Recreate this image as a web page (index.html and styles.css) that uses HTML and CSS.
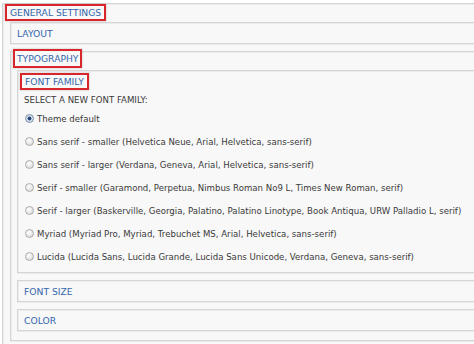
FILE: index.html
```html
<!DOCTYPE html>
<html>
<head>
<meta charset="utf-8">
<link rel="stylesheet" href="styles.css">
</head>
<body>
<div class="outer">
  <div class="legend-row top"><span class="legend mark">GENERAL SETTINGS</span></div>
  <div class="box collapsed first"><span class="title">LAYOUT</span></div>
  <div class="box typo">
    <div class="legend-row typo-legend"><span class="legend mark">TYPOGRAPHY</span></div>
    <div class="box family">
      <div class="legend-row fam-legend"><span class="legend mark">FONT FAMILY</span></div>
      <div class="desc">SELECT A NEW FONT FAMILY:</div>
      <ul class="options">
        <li><span class="radio checked"></span>Theme default</li>
        <li><span class="radio"></span>Sans serif - smaller (Helvetica Neue, Arial, Helvetica, sans-serif)</li>
        <li><span class="radio"></span>Sans serif - larger (Verdana, Geneva, Arial, Helvetica, sans-serif)</li>
        <li><span class="radio"></span>Serif - smaller (Garamond, Perpetua, Nimbus Roman No9 L, Times New Roman, serif)</li>
        <li><span class="radio"></span>Serif - larger (Baskerville, Georgia, Palatino, Palatino Linotype, Book Antiqua, URW Palladio L, serif)</li>
        <li><span class="radio"></span>Myriad (Myriad Pro, Myriad, Trebuchet MS, Arial, Helvetica, sans-serif)</li>
        <li><span class="radio"></span>Lucida (Lucida Sans, Lucida Grande, Lucida Sans Unicode, Verdana, Geneva, sans-serif)</li>
      </ul>
    </div>
    <div class="box collapsed sub"><span class="title">FONT SIZE</span></div>
    <div class="box collapsed sub"><span class="title">COLOR</span></div>
  </div>
</div>
</body>
</html>
```

FILE: styles.css
```css
html, body {
  margin: 0;
  padding: 0;
  background: #ffffff;
  overflow: hidden;
  width: 474px;
  height: 344px;
}
body {
  font-family: "DejaVu Sans", Verdana, sans-serif;
  font-size: 8.6px;
  color: #3a3a3a;
}
.outer {
  margin: 3px 0 0 2px;
  width: 700px;
  height: 341px;
  background: #f8f8f8;
  border-top: 1px solid #d5d5d5;
  border-left: 1px solid #d5d5d5;
  box-shadow: inset 1px 1px 0 #ececec;
  padding-left: 7px;
  box-sizing: border-box;
}
.legend-row {
  display: flex;
  height: 17px;
}
.legend-row.top {
  margin-left: -5px;
  margin-bottom: 1px;
}
.legend, .title {
  color: #3467ad;
  line-height: 13px;
  white-space: nowrap;
  font-size: 9.2px;
}
.mark {
  border: 2px solid #d9262c;
  padding: 0 3px;
  box-shadow: 0 0 2px rgba(120, 120, 120, 0.45);
  background: #f8f8f8;
}
.box {
  border: 1px solid #d5d5d5;
  box-shadow: inset 1px 1px 0 #ececec, 0 1px 0 #ebebeb;
  background: #f8f8f8;
  border-right: none;
}
.collapsed {
  height: 20px;
  display: flex;
  align-items: center;
  padding-left: 6px;
}
.typo {
  margin-top: 7px;
  padding-left: 6px;
  height: 288px;
}
.typo-legend {
  margin: -3px 0 0 -4px;
  height: 21px;
}
.typo-legend .mark {
  padding: 1px 2px;
  align-self: flex-start;
}
.family {
  padding-left: 6px;
  padding-bottom: 4px;
}
.fam-legend {
  margin: 2px 0 0 -4px;
}
.desc {
  margin-top: 4px;
  line-height: 13px;
  color: #3a3a3a;
}
.options {
  list-style: none;
  margin: 0;
  padding: 0;
}
.options li {
  height: 23px;
  display: flex;
  align-items: center;
  white-space: nowrap;
  color: #3a3a3a;
}
.radio {
  width: 9px;
  height: 9px;
  border-radius: 50%;
  border: 1px solid #adadad;
  background: radial-gradient(circle at 40% 35%, #ffffff 0%, #e4e4e4 60%, #cbcbcb 100%);
  margin: 0 3px 0 1px;
  box-sizing: border-box;
  flex: none;
}
.radio.checked {
  border-color: #7c8ea8;
  background: radial-gradient(circle, #1f3d6e 0%, #2c4f86 35%, #c9d4e2 45%, #eef1f5 100%);
}
.sub {
  margin-top: 7px;
}
```
